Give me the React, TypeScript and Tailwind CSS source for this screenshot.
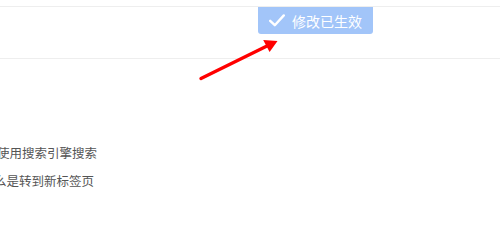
import React from "react";

export default function App() {
  return (
    <div
      className="relative w-[500px] h-[200px] overflow-hidden bg-white"
      style={{ fontFamily: '"Noto Sans CJK SC", "Noto Sans", sans-serif' }}
    >
      <div className="mt-[6px] h-[53px] border-y border-[#eeeeee]" />
      <div className="pt-[86px] flex flex-col gap-[12px] text-[12.5px] leading-[16px] text-[#555555] whitespace-nowrap">
        <div className="ml-[-3px]">使用搜索引擎搜索</div>
        <div className="ml-[-6px]">么是转到新标签页</div>
      </div>

      {/* toast */}
      <div className="absolute left-[258px] top-[7px] w-[115px] h-[27px] rounded-b-[3px] bg-[#a2c5f9] flex items-center pl-[11px] gap-[7px] text-white text-[14px] leading-none">
        <svg width="16" height="13" viewBox="0 0 16 13" fill="none">
          <path d="M1.2 6.8 L5.8 11.2 L14.8 1.4" stroke="white" strokeWidth="2.4" strokeLinecap="round" strokeLinejoin="round" />
        </svg>
        <span>修改已生效</span>
      </div>

      {/* annotation arrow */}
      <svg className="absolute left-0 top-0" width="500" height="200" viewBox="0 0 500 200">
        <line x1="201" y1="78.5" x2="268" y2="45.5" stroke="#ff0000" strokeWidth="3.4" strokeLinecap="round" />
        <polygon points="277.5,41 269.6,52 263.2,40" fill="#ff0000" />
      </svg>
    </div>
  );
}
